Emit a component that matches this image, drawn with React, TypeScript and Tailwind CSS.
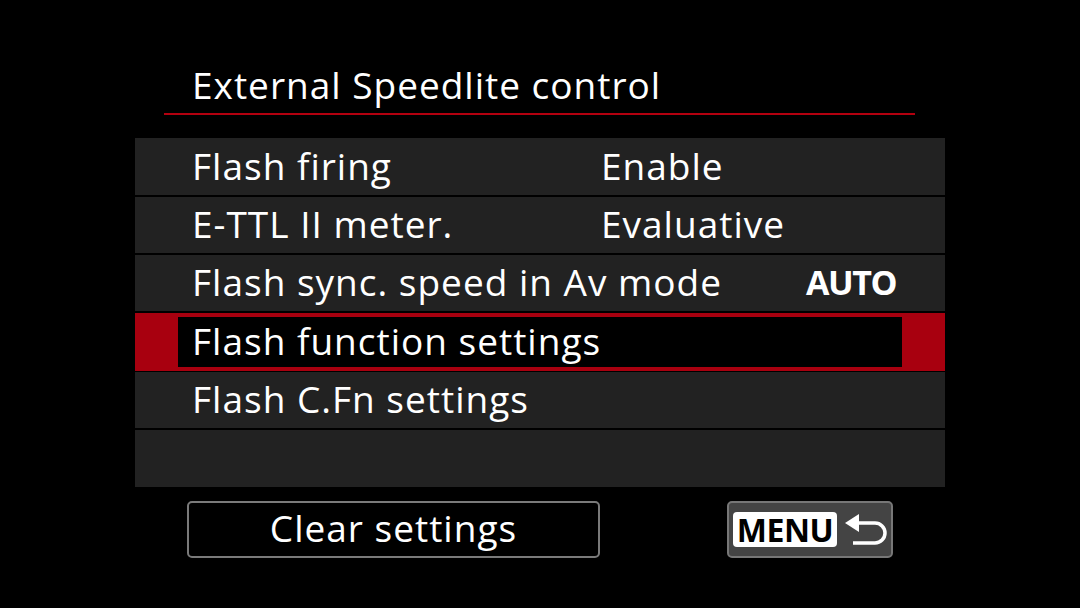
import React from "react";

const rows = [
  { label: "Flash firing", value: "Enable", h: "h-[57px]" },
  { label: "E-TTL II meter.", value: "Evaluative", h: "h-[56px]" },
  { label: "Flash sync. speed in Av mode", value: "AUTO", bold: true, h: "h-[56px]" },
  { label: "Flash function settings", selected: true, h: "h-[58px]" },
  { label: "Flash C.Fn settings", h: "h-[56px]" },
  { label: "", h: "h-[57px]" },
];

function ReturnArrow() {
  return (
    <svg width="42" height="32" viewBox="0 0 42 32" fill="none">
      <path d="M0 9 L14 0 L14 18 Z" fill="white" />
      <path
        d="M12 9 H30 A10 10 0 0 1 30 29 H8"
        stroke="white"
        strokeWidth="3.5"
        fill="none"
      />
    </svg>
  );
}

export default function App() {
  return (
    <div className="w-[1080px] h-[608px] bg-black text-white font-['Open_Sans',sans-serif] overflow-hidden">
      <div className="pt-[63px] pl-[192px] text-[37px] leading-[44px] tracking-[1px] whitespace-nowrap">
        External Speedlite control
      </div>
      <div className="ml-[164px] mt-[6px] w-[751px] h-[2px] bg-[#b3000f]" />
      <div className="ml-[135px] mt-[23px] w-[810px] flex flex-col">
        {rows.map((r, i) =>
          r.selected ? (
            <div key={i} className={`${r.h} mt-[2px] bg-[#a8000f] px-[43px] py-[4px]`}>
              <div className="h-full bg-black flex items-center pl-[14px] text-[37px] tracking-[1px] leading-none pb-[3px] whitespace-nowrap">
                {r.label}
              </div>
            </div>
          ) : (
            <div
              key={i}
              className={`${r.h} ${i === 0 ? "" : i === 4 ? "mt-[1px]" : "mt-[2px]"} bg-[#222222] flex items-center pl-[57px] text-[37px] tracking-[1px] leading-none pb-[3px] whitespace-nowrap ${r.bold ? "justify-between pr-[49px]" : ""}`}
            >
              <span className={r.bold ? "" : "w-[409px]"}>{r.label}</span>
              {r.value &&
                (r.bold ? (
                  <span className="font-bold text-[34px] tracking-[-1.5px]">{r.value}</span>
                ) : (
                  <span>{r.value}</span>
                ))}
            </div>
          )
        )}
      </div>
      <div className="flex items-center mt-[14px]">
        <div className="ml-[187px] w-[413px] h-[57px] border-2 border-[#7a7a7a] rounded-[5px] flex items-center justify-center text-[37px] tracking-[1px] pb-[3px]">
          Clear settings
        </div>
        <div className="ml-[127px] w-[166px] h-[57px] bg-[#444444] border-2 border-[#777777] rounded-[5px] flex items-center pl-[4px] gap-[8px]">
          <div className="w-[104px] h-[35px] bg-white rounded-[4px] text-black font-bold text-[32px] leading-none flex items-center justify-center tracking-[-0.5px]">
            MENU
          </div>
          <ReturnArrow />
        </div>
      </div>
    </div>
  );
}
